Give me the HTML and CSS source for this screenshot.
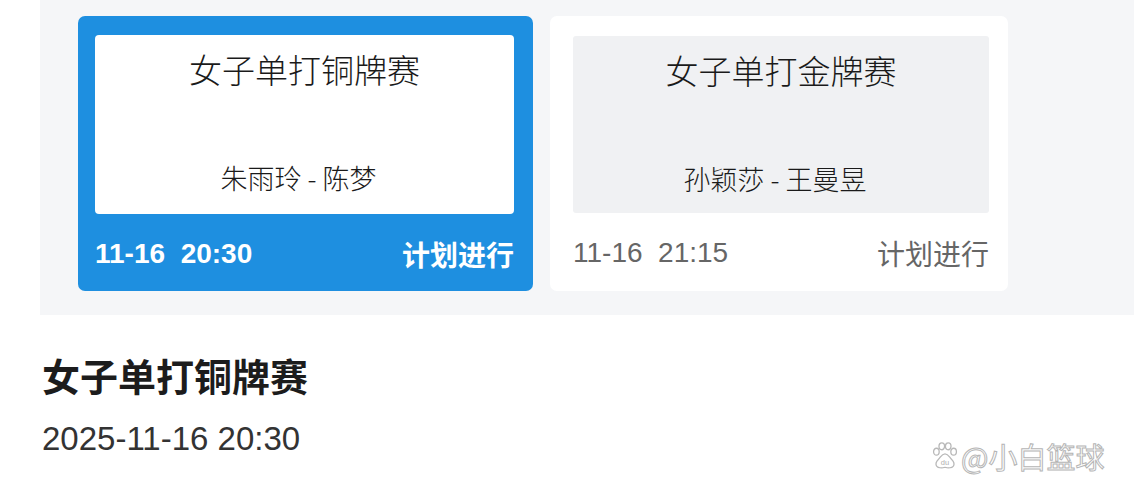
FILE: index.html
```html
<!DOCTYPE html>
<html lang="zh">
<head>
<meta charset="utf-8">
<link rel="stylesheet" href="styles.css">
</head>
<body>
<div class="panel">
  <div class="cards">
    <div class="card active">
      <div class="card-body">
        <div class="card-title">女子单打铜牌赛</div>
        <div class="card-names">朱雨玲 - 陈梦</div>
      </div>
      <div class="card-foot">
        <span class="time">11-16&nbsp; 20:30</span>
        <span class="status">计划进行</span>
      </div>
    </div>
    <div class="card">
      <div class="card-body">
        <div class="card-title">女子单打金牌赛</div>
        <div class="card-names">孙颖莎 - 王曼昱</div>
      </div>
      <div class="card-foot">
        <span class="time">11-16&nbsp; 21:15</span>
        <span class="status">计划进行</span>
      </div>
    </div>
  </div>
</div>
<div class="detail">
  <h1 class="detail-title">女子单打铜牌赛</h1>
  <div class="detail-date">2025-11-16 20:30</div>
</div>
<div class="watermark">
  <svg class="paw" width="26" height="28" viewBox="0 0 24 26">
    <g fill="#fff" stroke="#b8b8b8" stroke-width="1.2">
      <ellipse cx="4" cy="9" rx="2.6" ry="3.2"/>
      <ellipse cx="9" cy="4" rx="2.6" ry="3.2"/>
      <ellipse cx="15" cy="4" rx="2.6" ry="3.2"/>
      <ellipse cx="20" cy="9" rx="2.6" ry="3.2"/>
      <path d="M12 11c-3 0-4 3-6 5-2 2-3 4-2 6 1 2 3 2 5 2 2 0 2-.5 3-.5s1 .5 3 .5c2 0 4 0 5-2 1-2 0-4-2-6-2-2-3-5-6-5z"/>
    </g>
    <text x="12" y="21" text-anchor="middle" font-family="Liberation Sans, sans-serif" font-size="7" fill="#b0b0b0">du</text>
  </svg>
  <span class="wm-text">@小白篮球</span>
</div>
</body>
</html>
```
FILE: styles.css
```css
* { box-sizing: border-box; }
html, body {
  margin: 0;
  padding: 0;
  background: #ffffff;
}
body {
  width: 1134px;
  height: 494px;
  overflow: hidden;
  position: relative;
  font-family: "Liberation Sans", "Noto Sans CJK SC", sans-serif;
  color: #222;
}
.panel {
  margin-left: 40px;
  background: #f5f6f8;
  padding: 16px 0 24px 38px;
}
.cards {
  display: flex;
  gap: 17px;
}
.card {
  width: 458px;
  height: 275px;
  border-radius: 7px;
  background: #ffffff;
  padding: 20px 19px 0 23px;
  display: flex;
  flex-direction: column;
}
.card.active {
  width: 455px;
  background: #1e8fe0;
  padding: 19px 19px 0 17px;
}
.card-body {
  height: 177px;
  background: #f0f1f3;
  border-radius: 3px;
  display: flex;
  flex-direction: column;
  align-items: center;
}
.card.active .card-body {
  background: #ffffff;
  height: 179px;
  border-radius: 4px;
}
.card-title {
  font-family: "Noto Sans CJK SC", sans-serif;
  font-size: 33px;
  font-weight: 300;
  line-height: 40px;
  margin-top: 14px;
  color: #1a1a1a;
}
.card-names {
  font-family: "Noto Sans CJK SC", sans-serif;
  font-size: 27px;
  font-weight: 300;
  line-height: 34px;
  margin-top: 72px;
  margin-right: 12px;
  color: #1a1a1a;
}
.card-foot {
  flex: 1;
  display: flex;
  justify-content: space-between;
  align-items: center;
  padding-top: 2px;
  color: #666;
}
.card.active .card-foot {
  color: #ffffff;
  font-weight: bold;
}
.time {
  font-family: "Liberation Sans", sans-serif;
  font-size: 28px;
}
.status {
  font-family: "Noto Sans CJK SC", sans-serif;
  font-size: 28px;
  font-weight: 400;
}
.card.active .status {
  font-weight: 700;
}
.detail {
  padding: 34px 0 0 42px;
}
.detail-title {
  margin: 0;
  font-family: "Noto Sans CJK SC", sans-serif;
  font-size: 38px;
  font-weight: 700;
  line-height: 52px;
  color: #1c1c1c;
}
.detail-date {
  margin-top: 18px;
  font-family: "Liberation Sans", sans-serif;
  font-size: 33px;
  line-height: 40px;
  color: #333;
}
.watermark {
  position: absolute;
  left: 932px;
  top: 440px;
  display: flex;
  align-items: center;
  gap: 3px;
}
.wm-text {
  font-family: "Noto Sans CJK SC", sans-serif;
  font-size: 29px;
  line-height: 32px;
  color: #ffffff;
  -webkit-text-stroke: 1px #b5b5b5;
}
```
